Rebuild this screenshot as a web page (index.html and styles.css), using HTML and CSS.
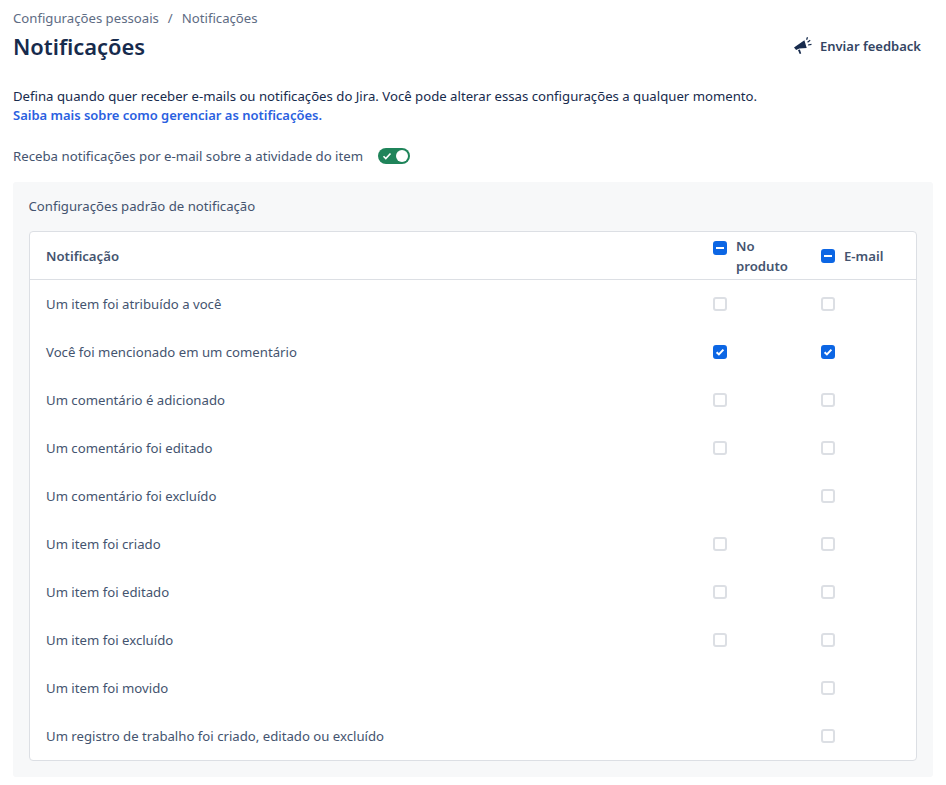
FILE: index.html
```html
<!DOCTYPE html>
<html lang="pt">
<head>
<meta charset="utf-8">
<title>Notificações</title>
<link rel="stylesheet" href="styles.css">
</head>
<body>
<main class="page">
  <nav class="crumbs"><span>Configurações pessoais</span><span class="sep">/</span><span>Notificações</span></nav>
  <header class="head">
    <h1>Notificações</h1>
    <button class="feedback">
      <svg width="20" height="20" viewBox="0 0 20 20"><path d="M1 11.4 11.4 4.2l2.3 7.9-7.4.5-3.2 1.3z" fill="#172b4d"/><path d="m5 14 1.9-.6 1.3 4-1.5.5zM14.2 5.8l2.6-2 .8 1-2.7 2zM15 8.4l3.4-.6.2 1.3-3.4.5zM13 3.6l.9-2.6 1.2.4-.9 2.6z" fill="#172b4d"/></svg>
      <span>Enviar feedback</span>
    </button>
  </header>
  <p class="intro">Defina quando quer receber e-mails ou notificações do Jira. Você pode alterar essas configurações a qualquer momento.<br><a href="#">Saiba mais sobre como gerenciar as notificações.</a></p>
  <div class="master">
    <span>Receba notificações por e-mail sobre a atividade do item</span>
    <span class="toggle"><svg width="10" height="10" viewBox="0 0 10 10"><path d="m1.5 5.2 2.3 2.3 4.7-5" fill="none" stroke="#fff" stroke-width="1.6"/></svg><i class="knob"></i></span>
  </div>
  <section class="panel">
    <h2>Configurações padrão de notificação</h2>
    <div class="table">
      <div class="row headrow">
        <div class="name">Notificação</div>
        <div class="col"><span class="box mixed"></span><span class="coltitle">No produto</span></div>
        <div class="col"><span class="box mixed"></span><span class="coltitle">E-mail</span></div>
      </div>
      <div class="row"><div class="name">Um item foi atribuído a você</div><div class="col"><span class="box"></span></div><div class="col"><span class="box"></span></div></div>
      <div class="row"><div class="name">Você foi mencionado em um comentário</div><div class="col"><span class="box on"><svg width="14" height="14" viewBox="0 0 14 14"><path d="m3.6 7.2 2.3 2.2 4.5-4.8" fill="none" stroke="#fff" stroke-width="2"/></svg></span></div><div class="col"><span class="box on"><svg width="14" height="14" viewBox="0 0 14 14"><path d="m3.6 7.2 2.3 2.2 4.5-4.8" fill="none" stroke="#fff" stroke-width="2"/></svg></span></div></div>
      <div class="row"><div class="name">Um comentário é adicionado</div><div class="col"><span class="box"></span></div><div class="col"><span class="box"></span></div></div>
      <div class="row"><div class="name">Um comentário foi editado</div><div class="col"><span class="box"></span></div><div class="col"><span class="box"></span></div></div>
      <div class="row"><div class="name">Um comentário foi excluído</div><div class="col"></div><div class="col"><span class="box"></span></div></div>
      <div class="row"><div class="name">Um item foi criado</div><div class="col"><span class="box"></span></div><div class="col"><span class="box"></span></div></div>
      <div class="row"><div class="name">Um item foi editado</div><div class="col"><span class="box"></span></div><div class="col"><span class="box"></span></div></div>
      <div class="row"><div class="name">Um item foi excluído</div><div class="col"><span class="box"></span></div><div class="col"><span class="box"></span></div></div>
      <div class="row"><div class="name">Um item foi movido</div><div class="col"></div><div class="col"><span class="box"></span></div></div>
      <div class="row"><div class="name">Um registro de trabalho foi criado, editado ou excluído</div><div class="col"></div><div class="col"><span class="box"></span></div></div>
    </div>
  </section>
</main>
</body>
</html>
```
FILE: styles.css
```css
* { box-sizing: border-box; }
html, body { margin: 0; background: #fff; }
body { font-family: "Noto Sans", "Open Sans", sans-serif; font-size: 13.18px; line-height: 20px; color: #172b4d; overflow: hidden; height: 785px; }
.page { padding: 8px 13px 0 13px; }
.crumbs { display: flex; gap: 9px; color: #5e6c84; height: 20px; }
.head { display: flex; justify-content: space-between; align-items: center; height: 32px; margin-top: 3px; }
h1 { margin: 0; font-size: 21.9px; font-weight: 600; line-height: 32px; color: #172b4d; }
.feedback { display: flex; align-items: center; gap: 7px; border: 0; padding: 0 12px 0 0; background: none; font: 600 13px/20px "Noto Sans", "Open Sans", sans-serif; color: #344563; margin-top: -2px; }
.intro { margin: 24px 0 0; line-height: 19px; height: 38px; color: #172b4d; }
.intro a { color: #2a60e0; font-weight: 600; font-size: 12.97px; text-decoration: none; }
.master { display: flex; align-items: center; gap: 14.5px; margin-top: 21px; color: #44546f; font-size: 13.22px; }
.toggle { width: 32px; height: 16px; border-radius: 8px; background: #1f845a; display: flex; align-items: center; justify-content: space-between; padding: 0 2px 0 4px; }
.knob { width: 12px; height: 12px; border-radius: 50%; background: #fff; }
.panel { margin-top: 16px; width: 920px; height: 595px; background: #f7f8f9; border-radius: 3px; padding: 14px 16px 16px 15.5px; }
h2 { margin: 0; font-size: 13.18px; font-weight: 400; line-height: 20px; color: #44546f; }
.table { margin-top: 15px; margin-left: .5px; background: #fff; border: 1px solid #dcdfe4; border-radius: 4px; }
.row { display: grid; grid-template-columns: 667px 108px 1fr; align-items: center; height: 48px; padding-left: 16px; color: #44546f; }
.headrow { border-bottom: 1px solid #dcdfe4; font-weight: 600; }
.col { display: flex; align-items: center; gap: 9px; }
.coltitle { width: 70px; }
.box { flex: none; width: 14px; height: 14px; border: 2px solid #dcdfe4; border-radius: 3px; background: #fff; display: block; position: relative; }
.box svg { position: absolute; inset: -2px; display: block; }
.box.on, .box.mixed { background: #0c66e4; border-color: #0c66e4; }
.box.mixed::after { content: ""; position: absolute; left: 1px; right: 1px; top: 4px; height: 2px; background: #fff; }
.headrow .col:nth-child(2) { align-items: flex-start; height: 40px; }
.headrow .col:nth-child(2) .box { margin-top: 5px; }
```
